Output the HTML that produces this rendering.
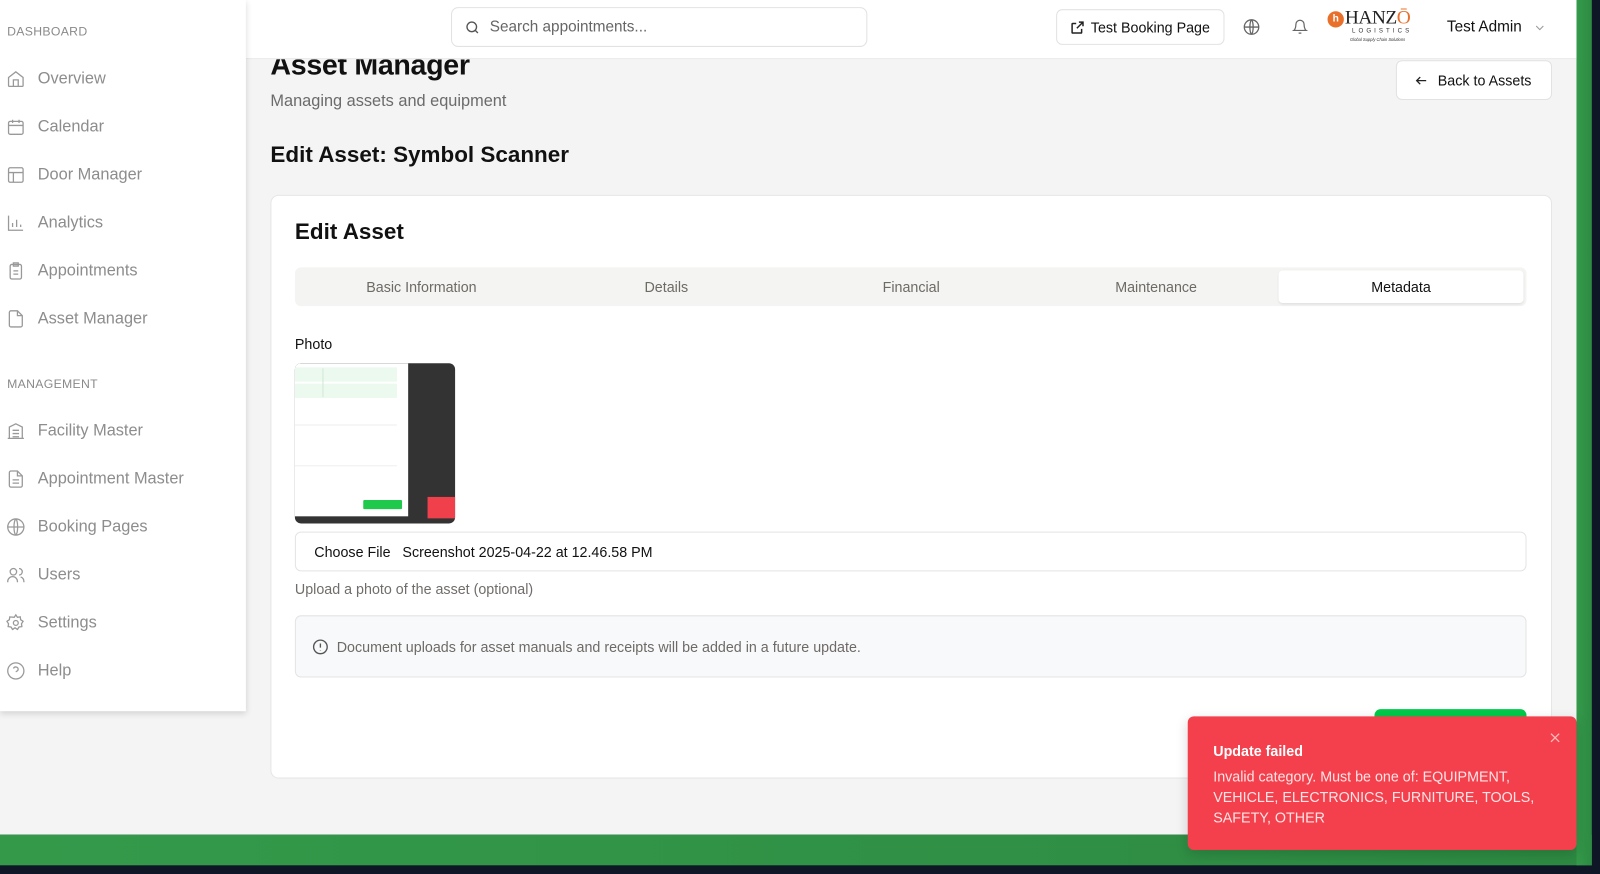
<!DOCTYPE html>
<html><head><meta charset="utf-8"><style>
*{box-sizing:border-box;margin:0;padding:0}
body{width:1600px;height:874px;overflow:hidden;background:#0f1726;font-family:"Liberation Sans",sans-serif;color:#111}
#w{position:absolute;left:0;top:0;width:1568px;height:857px;transform:scale(1.0204);transform-origin:0 0}
.abs{position:absolute}
.green{background:linear-gradient(90deg,#349a4a,#2d8a42)}
.side{left:0;top:0;width:241px;height:697px;background:#fff;box-shadow:0 2px 6px rgba(0,0,0,.15)}
.sec{position:absolute;left:7px;font-size:12px;color:#8a8a8a;letter-spacing:.3px}
.it{position:absolute;left:6px;font-size:16px;color:#8d8d8d;display:flex;align-items:center;gap:12px}
.it svg{width:19px;height:19px;stroke:#999;fill:none;stroke-width:1.6}
.hdr{left:241px;top:0;width:1304px;height:58px;background:#fff;border-bottom:1px solid #e8e8e8}
.btn{background:#fff;border:1px solid #e2e2e2;border-radius:6px;font-size:14px;display:flex;align-items:center}
</style></head><body><div id="w">
<div class="abs" style="left:0;top:0;width:1545px;height:818px;background:#f4f4f4"></div>
<div class="abs green" style="left:0;top:818px;width:1560px;height:30px"></div>
<div class="abs green" style="left:1545px;top:0;width:15px;height:848px"></div>

<div class="abs" style="left:265px;top:48px;font-size:28px;font-weight:bold;color:#111;letter-spacing:-.3px">Asset Manager</div>

<div class="abs hdr">
 <div class="abs btn" style="left:201px;top:7px;width:408px;height:39px;border-radius:7px;color:#666;font-size:15px;padding-left:12px;gap:9px">
  <svg width="16" height="16" viewBox="0 0 24 24" fill="none" stroke="#555" stroke-width="2"><circle cx="11" cy="11" r="7"/><path d="M20 20l-4-4"/></svg>Search appointments...</div>
 <div class="abs btn" style="left:794px;top:9px;width:165px;height:35px;padding-left:12px;gap:5px;color:#111">
  <svg width="16" height="16" viewBox="0 0 24 24" fill="none" stroke="#222" stroke-width="2.2"><path d="M14 4h6v6M20 4l-9 9M18 14v5a1 1 0 0 1-1 1H5a1 1 0 0 1-1-1V7a1 1 0 0 1 1-1h5"/></svg>Test Booking Page</div>
 <svg class="abs" style="left:977px;top:18px" width="17" height="17" viewBox="0 0 24 24" fill="none" stroke="#666" stroke-width="1.8"><circle cx="12" cy="12" r="10"/><path d="M2 12h20M12 2c3 3 3 17 0 20M12 2c-3 3-3 17 0 20"/></svg>
 <svg class="abs" style="left:1025px;top:18px" width="16" height="17" viewBox="0 0 24 24" fill="none" stroke="#666" stroke-width="1.8"><path d="M6 8a6 6 0 0 1 12 0c0 7 3 9 3 9H3s3-2 3-9M10 21h4"/></svg>
 <div class="abs" style="left:1060px;top:11px;width:16px;height:16px;border-radius:50%;background:#e8702a;color:#fff;font-size:10px;text-align:center;line-height:16px;font-weight:bold">h</div>
 <div class="abs" style="left:1077px;top:7px;font-size:19px;font-family:'Liberation Serif',serif;color:#222;letter-spacing:-.5px">HANZ<span style="color:#e8702a">Ō</span></div>
 <div class="abs" style="left:1084px;top:28px;font-size:6px;letter-spacing:3px;color:#333">LOGISTICS</div>
 <div class="abs" style="left:1082px;top:36px;font-size:4px;color:#333;font-style:italic">Global Supply Chain Solutions</div>
 <div class="abs" style="left:1177px;top:18px;font-size:15px;color:#111">Test Admin</div>
 <svg class="abs" style="left:1262px;top:21px" width="12" height="12" viewBox="0 0 24 24" fill="none" stroke="#999" stroke-width="2"><path d="M5 9l7 7 7-7"/></svg>
</div>

<div class="abs side">
 <div class="sec" style="top:24px">DASHBOARD</div>
 <div class="it" style="top:68px"><svg viewBox="0 0 24 24"><path d="M3 10l9-7 9 7v10a1 1 0 0 1-1 1H4a1 1 0 0 1-1-1z"/><path d="M9 21v-8h6v8"/></svg>Overview</div>
 <div class="it" style="top:115px"><svg viewBox="0 0 24 24"><rect x="3" y="5" width="18" height="16" rx="2"/><path d="M3 10h18M8 3v4M16 3v4"/></svg>Calendar</div>
 <div class="it" style="top:162px"><svg viewBox="0 0 24 24"><rect x="3" y="3" width="18" height="18" rx="2"/><path d="M3 9h18M9 9v12"/></svg>Door Manager</div>
 <div class="it" style="top:209px"><svg viewBox="0 0 24 24"><path d="M3 3v18h18M8 17v-5M13 17V8M18 17v-3"/></svg>Analytics</div>
 <div class="it" style="top:256px"><svg viewBox="0 0 24 24"><rect x="5" y="4" width="14" height="18" rx="2"/><path d="M9 2h6v4H9zM9 12h6M9 16h6"/></svg>Appointments</div>
 <div class="it" style="top:303px"><svg viewBox="0 0 24 24"><path d="M14 2H6a2 2 0 0 0-2 2v16a2 2 0 0 0 2 2h12a2 2 0 0 0 2-2V8z"/><path d="M14 2v6h6"/></svg>Asset Manager</div>
 <div class="sec" style="top:369px">MANAGEMENT</div>
 <div class="it" style="top:413px"><svg viewBox="0 0 24 24"><path d="M2 21h20M4 21V7l8-4 8 4v14M8 11h8M8 15h8M8 19h8"/></svg>Facility Master</div>
 <div class="it" style="top:460px"><svg viewBox="0 0 24 24"><path d="M14 2H6a2 2 0 0 0-2 2v16a2 2 0 0 0 2 2h12a2 2 0 0 0 2-2V8z"/><path d="M14 2v6h6M8 13h8M8 17h8"/></svg>Appointment Master</div>
 <div class="it" style="top:507px"><svg viewBox="0 0 24 24"><circle cx="12" cy="12" r="10"/><path d="M2 12h20M12 2c3 3 3 17 0 20M12 2c-3 3-3 17 0 20"/></svg>Booking Pages</div>
 <div class="it" style="top:554px"><svg viewBox="0 0 24 24"><circle cx="9" cy="8" r="4"/><path d="M2 21v-1a6 6 0 0 1 12 0v1M16 4a4 4 0 0 1 0 8M22 21v-1a6 6 0 0 0-4-5.6"/></svg>Users</div>
 <div class="it" style="top:601px"><svg viewBox="0 0 24 24"><circle cx="12" cy="12" r="3"/><path d="M12 2l2 3 3.5-.5.5 3.5 3 2-2 3 .5 3.5-3.5.5-2 3-3-2-3 2-2-3-3.5-.5.5-3.5-2-3 3-2 .5-3.5L10 5z"/></svg>Settings</div>
 <div class="it" style="top:648px"><svg viewBox="0 0 24 24"><circle cx="12" cy="12" r="10"/><path d="M9.1 9a3 3 0 0 1 5.8 1c0 2-3 3-3 3M12 17h.01"/></svg>Help</div>
</div>

<div class="abs" style="left:265px;top:91px;font-size:16px;color:#6b6b6b">Managing assets and equipment</div>
<div class="abs btn" style="left:1368px;top:59px;width:153px;height:39px;padding-left:17px;gap:9px;color:#111">
 <svg width="14" height="14" viewBox="0 0 24 24" fill="none" stroke="#222" stroke-width="2.2"><path d="M20 12H4M10 6l-6 6 6 6"/></svg>Back to Assets</div>
<div class="abs" style="left:265px;top:139px;font-size:22px;font-weight:bold;color:#111">Edit Asset: Symbol Scanner</div>

<div class="abs" style="left:265px;top:191px;width:1256px;height:572px;background:#fff;border:1px solid #e6e6e6;border-radius:8px"></div>
<div class="abs" style="left:289px;top:214px;font-size:22px;font-weight:bold">Edit Asset</div>
<div class="abs" style="left:289px;top:262px;width:1207px;height:38px;background:#f4f4f2;border-radius:6px;font-size:14px;color:#6e6a66">
 <div class="abs" style="left:0;width:248px;top:11px;text-align:center">Basic Information</div>
 <div class="abs" style="left:240px;width:248px;top:11px;text-align:center">Details</div>
 <div class="abs" style="left:480px;width:248px;top:11px;text-align:center">Financial</div>
 <div class="abs" style="left:720px;width:248px;top:11px;text-align:center">Maintenance</div>
 <div class="abs" style="left:964px;top:3px;width:240px;height:32px;background:#fff;border-radius:4px;box-shadow:0 1px 2px rgba(0,0,0,.08);color:#111;text-align:center;line-height:32px">Metadata</div>
</div>
<div class="abs" style="left:289px;top:329px;font-size:14px;color:#111">Photo</div>
<div class="abs" style="left:289px;top:356px;width:157px;height:157px;background:#333;border-radius:6px;overflow:hidden">
 <div class="abs" style="left:0;top:0;width:111px;height:150px;background:#fff"></div>
 <div class="abs" style="left:0;top:4px;width:100px;height:14px;background:#ecf9ee"></div>
 <div class="abs" style="left:0;top:20px;width:100px;height:14px;background:#ecf9ee"></div>
 <div class="abs" style="left:27px;top:5px;width:1px;height:28px;background:#cfe8d4"></div>
 <div class="abs" style="left:0;top:60px;width:100px;height:1px;background:#eee"></div>
 <div class="abs" style="left:0;top:100px;width:100px;height:1px;background:#eee"></div>
 <div class="abs" style="left:67px;top:134px;width:38px;height:9px;background:#1ec94c;border-radius:1px"></div>
 <div class="abs" style="left:130px;top:131px;width:27px;height:21px;background:#f0404c"></div>
</div>
<div class="abs" style="left:289px;top:521px;width:1207px;height:39px;border:1px solid #e4e4e4;border-radius:6px;font-size:14px;padding:11px 0 0 18px;color:#111">Choose File&nbsp;&nbsp; Screenshot 2025-04-22 at 12.46.58 PM</div>
<div class="abs" style="left:289px;top:569px;font-size:14px;color:#716d6a">Upload a photo of the asset (optional)</div>
<div class="abs" style="left:289px;top:603px;width:1207px;height:61px;background:#f8f9fa;border:1px solid #e4e4e4;border-radius:6px;font-size:14px;color:#6e6a66;display:flex;align-items:center;padding-left:16px;gap:8px">
 <svg width="16" height="16" viewBox="0 0 24 24" fill="none" stroke="#555" stroke-width="2"><circle cx="12" cy="12" r="10"/><path d="M12 7v6M12 16.5v.5"/></svg>Document uploads for asset manuals and receipts will be added in a future update.</div>
<div class="abs" style="left:1347px;top:695px;width:149px;height:38px;background:#00c94a;border-radius:6px"></div>

<div class="abs" style="left:1164px;top:702px;width:381px;height:131px;background:#f4404c;border-radius:6px;box-shadow:0 4px 12px rgba(0,0,0,.15);color:#fff">
 <div class="abs" style="left:25px;top:26px;font-size:14px;font-weight:bold">Update failed</div>
 <div class="abs" style="left:25px;top:49px;width:320px;font-size:14px;line-height:20px;color:#fde4e6">Invalid category. Must be one of: EQUIPMENT, VEHICLE, ELECTRONICS, FURNITURE, TOOLS, SAFETY, OTHER</div>
 <svg class="abs" style="left:354px;top:15px" width="12" height="12" viewBox="0 0 24 24" stroke="#fbb" stroke-width="2.5"><path d="M4 4l16 16M20 4L4 20"/></svg>
</div>
</div></body></html>
